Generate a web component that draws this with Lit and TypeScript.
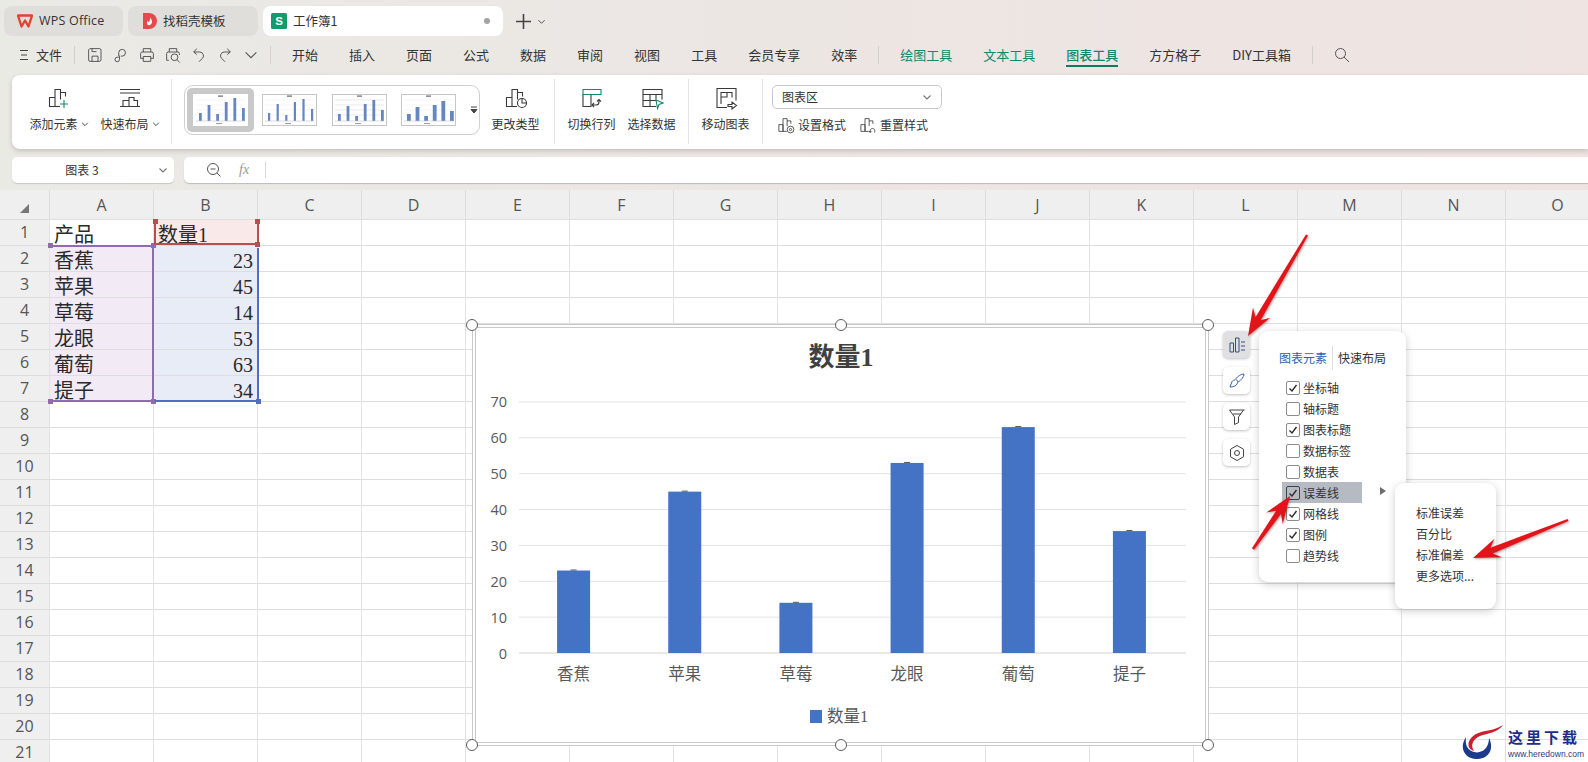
import { LitElement, html, css, svg } from "lit";
import { customElement } from "lit/decorators.js";
import { classMap } from "lit/directives/class-map.js";

const MENU = ["开始", "插入", "页面", "公式", "数据", "审阅", "视图", "工具", "会员专享", "效率"];
const COLS = "ABCDEFGHIJKLMNO".split("");
const ROWS = Array.from({ length: 21 }, (_, i) => i + 1);
const DATA = [
  ["香蕉", 23],
  ["苹果", 45],
  ["草莓", 14],
  ["龙眼", 53],
  ["葡萄", 63],
  ["提子", 34],
] as [string, number][];

const ELEMENTS: [string, boolean][] = [
  ["坐标轴", true],
  ["轴标题", false],
  ["图表标题", true],
  ["数据标签", false],
  ["数据表", false],
  ["误差线", true],
  ["网格线", true],
  ["图例", true],
  ["趋势线", false],
];

const icon = (body: unknown, size = 24) => html`<svg
  width=${size}
  height=${size}
  viewBox="0 0 24 24"
  fill="none"
  stroke="#3a3a3a"
  stroke-width="1.1"
>${body}</svg>`;

// the chart glyph that most ribbon icons are built on
const barsGlyph = svg`<path d="M2.5 11.5h5.5v9h-5.5zM8 20.5v-17h5.5v3h5v4M13.500 6.500v7" />`;

const ICONS = {
  addElement: icon(svg`${barsGlyph}<path d="M8 20.500h5" /><path d="M17 14v8M13 18h8" stroke="#0f8a6d" />`),
  quickLayout: icon(svg`<path d="M2 3.500h20M2 7h20M2 20.500h20M5 20.500v-6h6v6M11 14.500v-3h5v3h3.500v6" />`),
  changeType: icon(svg`${barsGlyph}<path d="M8 20.500h5" /><circle cx="18" cy="17" r="4.500" /><path d="M18 12.500V17h4.500" />`),
  swap: icon(svg`<path d="M3 3.500h18v5H3z" stroke="#0f8a6d" /><path d="M3 8.500v12h8v-12M11 20.500" /><path d="M12 19h4c2 0 3-1 3-3v-2M17 15.500l2-2 2 2M14 17l-2 2 2 2" />`),
  selectData: icon(svg`<path d="M16 20.500H3v-17h19v10M3 8.500h19M3 14.500h13M10 8.500v12M16 8.500v5" /><path d="M16 14l7 3-4 1.500-1.500 4z" stroke="#0f8a6d" />`),
  moveChart: icon(svg`<path d="M13 21.500H3v-19h19v12" /><path d="M7 18V6.500h11v5M7 11h6v-4.500" /><path d="M14 18.500h4v-2.500l4.500 3.500-4.500 3.500v-2.500h-4z" />`),
};

const SMALL_ICONS = {
  format: icon(svg`${barsGlyph}<path d="M8 20.500h5" /><circle cx="18" cy="18" r="4.500" /><circle cx="18" cy="18" r="1.500" />`, 18),
  reset: icon(svg`${barsGlyph}<path d="M8 20.500h5" /><path d="M15 22v-3c0-3 6-3 6 0v3M13.500 20l1.500 2 1.500-2" />`, 18),
};

const QUICK_ICONS = [
  svg`<path d="M5 3.500h13a2 2 0 0 1 2 2v13a2 2 0 0 1-2 2H5.500a2 2 0 0 1-2-2V5zM8 20.500v-7h8v7M8 3.500v4h6" />`,
  svg`<path d="M11 13.500H9v-5a4.500 4.500 0 1 1 4.500 5H12M10 14v4a3 3 0 1 1-3-3h2" />`,
  svg`<path d="M7 8V3.500h10V8M7 16.500H3.500V10a2 2 0 0 1 2-2h13a2 2 0 0 1 2 2v6.500H17M7 14h10v6.500H7z" />`,
  svg`<path d="M7 8V3.500h10V8M6.500 19H3.500V10a2 2 0 0 1 2-2h13a2 2 0 0 1 2 2v2" /><circle cx="14" cy="15" r="4.500" /><path d="M17.500 18.500l3.500 3.500" />`,
  svg`<path d="M9 3.500L5 8l4 3.500M5 8h8a5 5 0 0 1 3 9l-4 4" />`,
  svg`<path d="M15 3.500L19 8l-4 3.500M19 8h-8a5 5 0 0 0-3 9l4 4" />`,
];

function arrowPoints(tx: number, ty: number, px: number, py: number) {
  const len = Math.hypot(px - tx, py - ty);
  const dx = (px - tx) / len;
  const dy = (py - ty) / len;
  const at = (back: number, side: number) =>
    `${(px - dx * back - dy * side).toFixed(1)},${(py - dy * back + dx * side).toFixed(1)}`;
  return [
    `${(tx - dy * 1.2).toFixed(1)},${(ty + dx * 1.2).toFixed(1)}`,
    at(20, 3),
    at(27, 10),
    `${px},${py}`,
    at(27, -10),
    at(20, -3),
    `${(tx + dy * 1.2).toFixed(1)},${(ty - dx * 1.2).toFixed(1)}`,
  ].join(" ");
}

@customElement("app-root")
export class AppRoot extends LitElement {
  static styles = css`
    :host {
      display: block;
      position: relative;
      width: 1588px;
      height: 762px;
      overflow: hidden;
      background: linear-gradient(90deg, #eaeae5 0%, #ece6e3 50%, #efe4e2 100%);
      font-family: "Noto Sans CJK SC", sans-serif;
      font-size: 12px;
      color: #333;
    }

    svg {
      display: block;
      flex: none;
    }

    /* tabs */
    .tabs {
      display: flex;
      align-items: center;
      gap: 5px;
      height: 30px;
      padding: 6px 0 0 4px;
    }
    .tab {
      display: flex;
      align-items: center;
      gap: 6px;
      height: 30px;
      padding-left: 13px;
      box-sizing: border-box;
      border-radius: 8px;
      background: #dfdeda;
      font-size: 12.5px;
      line-height: 30px;
    }
    .tab.wps {
      width: 119px;
      font-family: "Open Sans", sans-serif;
      letter-spacing: 0.2px;
    }
    .tab.docer {
      width: 130px;
      padding-left: 14px;
    }
    .tab.book {
      width: 240px;
      padding-left: 8px;
      background: #fff;
    }
    .tab .dot {
      width: 6px;
      height: 6px;
      margin-left: auto;
      margin-right: 13px;
      border-radius: 50%;
      background: #a2a2a2;
    }
    .tab-add {
      display: flex;
      align-items: center;
      gap: 6px;
      margin-left: 8px;
    }

    /* menu row */
    .menu {
      display: flex;
      align-items: center;
      height: 31px;
      margin-top: 3px;
      padding-left: 19px;
      font-size: 13px;
      line-height: 31px;
    }
    .menu .file {
      margin-left: 7px;
      margin-right: 12px;
    }
    .menu .sep {
      width: 1px;
      height: 18px;
      background: #d4d0ce;
    }
    .quick {
      display: flex;
      gap: 8px;
      margin: 0 10px 0 11px;
    }
    .menu .items {
      display: flex;
      gap: 31px;
      margin: 0 21px;
    }
    .menu .tool-tab {
      color: #0f8a6d;
    }
    .menu .tool-tab.active {
      position: relative;
      font-weight: 500;
    }
    .menu .tool-tab.active::after {
      content: "";
      position: absolute;
      left: 0;
      right: 0;
      bottom: 3px;
      height: 2px;
      background: #0f7a62;
    }
    .menu .search {
      margin-left: 21px;
    }

    /* ribbon */
    .ribbon {
      display: flex;
      align-items: stretch;
      height: 74px;
      margin-left: 12px;
      margin-top: 5px;
      padding: 4px 0 5px 18px;
      box-sizing: border-box;
      border-radius: 8px 0 0 8px;
      background: #fff;
      box-shadow: 0 2px 5px rgba(60, 50, 50, 0.22);
      position: relative;
    }
    .rb-sep {
      width: 1px;
      background: #e4e4e4;
      flex: none;
    }
    .tool {
      display: flex;
      flex-direction: column;
      align-items: center;
      width: 47px;
      padding-top: 7px;
      flex: none;
      margin-right: 13px;
    }
    .tool .label {
      display: flex;
      align-items: center;
      gap: 3px;
      margin-top: 5px;
      height: 18px;
      line-height: 18px;
      white-space: nowrap;
    }
    .tool.caret {
      width: 58px;
    }
    .tool.last-caret {
      margin-right: 12px;
    }
    .tool.first {
      margin-left: 13px;
    }
    .tool.change {
      margin-right: 15px;
    }
    .gallery {
      display: flex;
      align-items: center;
      gap: 2px;
      width: 296px;
      height: 50px;
      margin: 6px 12px 0;
      padding-left: 2px;
      box-sizing: border-box;
      border: 1px solid #cfcfcf;
      border-radius: 9px;
      flex: none;
    }
    .thumb {
      display: flex;
      align-items: center;
      justify-content: center;
      width: 68px;
      height: 44px;
      border-radius: 5px;
    }
    .thumb.selected {
      background: #c9c9c9;
    }
    .gallery .more {
      margin-left: 5px;
    }
    .format {
      width: 170px;
      margin-left: 9px;
      margin-top: 6px;
    }
    .select {
      display: flex;
      align-items: center;
      justify-content: space-between;
      height: 24px;
      padding: 0 9px;
      box-sizing: border-box;
      border: 1px solid #c9c9c9;
      border-radius: 5px;
      line-height: 22px;
    }
    .format-row {
      display: flex;
      gap: 13px;
      margin-top: 7px;
      padding-left: 5px;
    }
    .format-row span {
      display: flex;
      align-items: center;
      gap: 3px;
      line-height: 18px;
    }

    /* formula row */
    .formula {
      display: flex;
      gap: 10px;
      height: 26px;
      margin: 8px 0 7px 12px;
    }
    .name-box {
      display: flex;
      align-items: center;
      justify-content: center;
      position: relative;
      width: 162px;
      border-radius: 5px;
      background: #fff;
      box-shadow: 0 1px 1px rgba(0, 0, 0, 0.15);
      line-height: 26px;
      padding-right: 22px;
      box-sizing: border-box;
    }
    .name-box svg {
      position: absolute;
      right: 6px;
      top: 8px;
    }
    .formula-box {
      display: flex;
      align-items: center;
      flex: 1;
      padding-left: 22px;
      border-radius: 5px 0 0 5px;
      background: #fff;
      box-shadow: 0 1px 1px rgba(0, 0, 0, 0.2);
    }
    .fx {
      margin-left: 17px;
      font-family: "Liberation Serif", serif;
      font-style: italic;
      font-size: 14px;
      color: #9a9a9a;
      width: 26px;
    }
    .formula-box .bar {
      width: 1px;
      height: 16px;
      background: #d8d8d8;
    }

    /* sheet */
    .sheet,
    .ranges {
      display: grid;
      grid-template-columns: 49px repeat(15, 104px);
      grid-template-rows: 29px repeat(21, 26px);
    }
    .sheet {
      background: #fff;
      position: relative;
    }
    .ranges {
      position: absolute;
      left: 0;
      top: 0;
      pointer-events: none;
    }
    .corner,
    .col-head,
    .row-head {
      display: flex;
      align-items: center;
      justify-content: center;
      box-sizing: border-box;
      background: #efefef;
      font-family: "Open Sans", sans-serif;
      font-size: 16px;
      color: #555;
    }
    .corner {
      justify-content: flex-end;
      padding: 8px 20px 0 0;
    }
    .col-head {
      border-left: 1px solid #dcdcdc;
    }
    .row-head {
      border-top: 1px solid #dcdcdc;
      padding-bottom: 2px;
    }
    .cell {
      box-sizing: border-box;
      border-top: 1px solid #dedede;
      border-left: 1px solid #e2e2e2;
      padding: 3px 4px 0 4px;
      font-family: "Liberation Serif", "Noto Sans CJK SC", serif;
      font-size: 20px;
      line-height: 24px;
      color: #2a2a2a;
      white-space: nowrap;
    }
    .cell.num {
      text-align: right;
    }
    .cell.fill-a {
      background: #f2ebf5;
    }
    .cell.fill-b {
      background: #e7ecf7;
    }
    .cell.fill-r {
      background: #f9e9e8;
    }
    .range {
      position: relative;
      box-sizing: border-box;
    }
    .range.purple {
      grid-column: 2;
      grid-row: 3 / 9;
      margin: 0 -1px -1px 0;
      border-top: 2px solid #8e6bb2;
      border-right: 2px solid #8e6bb2;
      border-bottom: 2px solid #8e6bb2;
    }
    .range.red {
      grid-column: 3;
      grid-row: 2;
      margin: 2px -2px 0 1px;
      border-left: 2px solid #b5504f;
      border-right: 2px solid #b5504f;
      border-bottom: 2px solid #b5504f;
    }
    .range.blue {
      grid-column: 3;
      grid-row: 3 / 9;
      margin: 3px -2px -1px 2px;
      border-right: 2px solid #4f6fc0;
      border-bottom: 2px solid #4f6fc0;
    }
    .sq {
      position: absolute;
      width: 5px;
      height: 5px;
    }
    .sq.tl { left: -1px; top: -4px; }
    .sq.tr { right: -4px; top: -4px; }
    .sq.bl { left: -1px; bottom: -4px; }
    .sq.br { right: -4px; bottom: -4px; }
    .red .sq.tl { left: -3px; top: -2px; }
    .red .sq.tr { right: -3px; top: -2px; }
    .red .sq.br { right: -3px; }
    .purple .sq {
      background: #8e6bb2;
    }
    .red .sq {
      background: #b5504f;
    }
    .blue .sq {
      background: #4f6fc0;
    }

    /* chart overlay */
    .chart {
      position: absolute;
      left: 472px;
      top: 324px;
      width: 737px;
      height: 422px;
      box-sizing: border-box;
      border: 4px double #c9c9c9;
      background: #fff;
    }
    .handle {
      position: absolute;
      width: 10px;
      height: 10px;
      border: 1px solid #5c5c5c;
      border-radius: 50%;
      background: #fff;
      transform: translate(-50%, -50%);
    }
    .h-l { left: -4px; }
    .h-c { left: 50%; }
    .h-r { left: calc(100% + 3px); }
    .h-t { top: -3px; }
    .h-b { top: calc(100% + 3px); }

    .chart text {
      font-family: "Open Sans", "Noto Sans CJK SC", sans-serif;
      fill: #595959;
    }
    .chart text.cjk {
      font-family: "Liberation Serif", "Noto Sans CJK SC", serif;
      font-size: 16.5px;
    }
    .chart text.title {
      font-family: "Liberation Serif", "Noto Sans CJK SC", serif;
      font-size: 26px;
      font-weight: 700;
      fill: #404040;
    }

    /* chart side buttons */
    .side {
      position: absolute;
      left: 1223px;
      top: 331px;
      display: flex;
      flex-direction: column;
      gap: 9px;
    }
    .side div {
      display: flex;
      align-items: center;
      justify-content: center;
      width: 27px;
      height: 27px;
      border-radius: 5px;
      background: #fff;
      box-shadow: 0 1px 3px rgba(0, 0, 0, 0.25);
    }
    .side div.on {
      background: #e0e0e2;
    }

    .panel {
      position: absolute;
      left: 1259px;
      top: 331px;
      width: 147px;
      height: 251px;
      padding-top: 17px;
      box-sizing: border-box;
      border-radius: 9px;
      background: #fff;
      box-shadow: 0 2px 9px rgba(0, 0, 0, 0.2);
    }
    .panel-tabs {
      display: flex;
      align-items: center;
      gap: 5px;
      height: 20px;
      margin-bottom: 9px;
      padding-left: 20px;
      line-height: 20px;
    }
    .panel-tabs .on {
      color: #2b62b5;
    }
    .panel-tabs i {
      width: 1px;
      height: 24px;
      background: #e0e0e0;
    }
    .check-row {
      display: flex;
      align-items: center;
      gap: 3px;
      width: 76px;
      height: 21px;
      margin-left: 23px;
      padding-left: 4px;
      line-height: 21px;
    }
    .check-row.hover {
      background: #b6bac3;
    }
    .box {
      display: flex;
      align-items: center;
      justify-content: center;
      width: 14px;
      height: 14px;
      box-sizing: border-box;
      border: 1px solid #8c8c8c;
      border-radius: 2px;
      background: #fff;
      flex: none;
    }
    .check-row.hover .box {
      background: transparent;
      border-color: #444;
    }
    .more-arrow {
      position: absolute;
      left: 121px;
      top: 156px;
      width: 0;
      height: 0;
      border-left: 6px solid #6d6d6d;
      border-top: 4px solid transparent;
      border-bottom: 4px solid transparent;
    }
    .submenu {
      position: absolute;
      left: 1395px;
      top: 483px;
      width: 101px;
      height: 126px;
      padding: 19px 0 0 21px;
      box-sizing: border-box;
      border-radius: 9px;
      background: #fff;
      box-shadow: 0 2px 9px rgba(0, 0, 0, 0.2);
      line-height: 21px;
    }

    .arrows {
      position: absolute;
      left: 0;
      top: 0;
      pointer-events: none;
      filter: drop-shadow(1px 1px 1px rgba(90, 40, 40, 0.45));
    }

    /* watermark */
    .mark {
      position: absolute;
      left: 1460px;
      top: 722px;
      display: flex;
      gap: 3px;
    }
    .mark .t1 {
      font-family: "Noto Sans CJK SC", sans-serif;
      font-weight: 700;
      font-size: 15px;
      line-height: 20px;
      letter-spacing: 3px;
      color: #1f2d86;
      margin-top: 5px;
    }
    .mark .t2 {
      font-family: "Liberation Sans", sans-serif;
      font-size: 8.5px;
      line-height: 12px;
      color: #2f3a78;
      margin-top: 1px;
    }
    .mark .words {
      margin-left: 1px;
    }
  `;

  private chevron(size = 10, color = "#777") {
    return html`<svg width=${size} height=${size} viewBox="0 0 10 10" fill="none" stroke=${color} stroke-width="1.1"><path d="M1.500 3.500L5 7l3.500-3.500" /></svg>`;
  }

  private thumb(values: number[], thick: number, selected = false, fade = false) {
    const bars = values.map(
      (v, i) => svg`<rect x=${6 + i * 8.6} y=${27 - v} width=${thick} height=${v} fill="#4a71b8" opacity="0.85" />`
    );
    const lines = [6, 11, 16, 21].map(
      (y) => svg`<path d="M3 ${y}h49" stroke=${fade ? "#dcdcdc" : "#eeeeee"} stroke-width="0.6" />`
    );
    return html`<div class=${classMap({ thumb: true, selected })}>
      <svg width="55" height="32" viewBox="0 0 55 32">
        <rect x="0.500" y="0.500" width="54" height="31" fill="#fff" stroke=${selected ? "#fff" : "#c6c6c6"} />
        ${lines}
        <rect x="25" y="1.500" width="5" height="1.200" fill="#666" />
        ${bars}
        <path d="M3 27h49" stroke="#c4c4c4" stroke-width="0.6" />
        <rect x="23" y="29" width="6" height="0.800" fill="#888" />
      </svg>
    </div>`;
  }

  private tool(label: string, ic: unknown, extra: Record<string, boolean> = {}) {
    return html`<div class=${classMap({ tool: true, ...extra })}>
      ${ic}
      <div class="label">${label}${extra.caret ? this.chevron(8, "#333") : ""}</div>
    </div>`;
  }

  private renderChart() {
    const x0 = 43;
    const x1 = 710;
    const y0 = 325;
    const unit = 3.586;
    const band = (x1 - x0) / DATA.length;
    return html`<div class="chart">
      <svg width="729" height="414" viewBox="0 0 729 414">
        <text class="title" x="365" y="38" text-anchor="middle">数量1</text>
        ${[0, 10, 20, 30, 40, 50, 60, 70].map((v) => {
          const y = y0 - v * unit;
          return svg`
            <path d="M${x0} ${y}H${x1}" stroke=${v === 0 ? "#d2d2d2" : "#e3e3e3"} />
            <text x="31" y=${y + 5.500} text-anchor="end" font-size="14.500">${v}</text>`;
        })}
        ${DATA.map(([name, v], i) => {
          const cx = x0 + band * (i + 0.5) - 1;
          const top = y0 - v * unit;
          return svg`
            <rect x=${cx - 16.500} y=${top} width="33" height=${v * unit} fill="#4472c4" />
            <path d="M${cx - 3} ${top - 0.500}h6" stroke="#555" />
            <text class="cjk" x=${cx} y="352" text-anchor="middle">${name}</text>`;
        })}
        <rect x="334" y="382" width="12" height="13" fill="#4472c4" />
        <text class="cjk" x="351" y="394">数量1</text>
      </svg>
      <i class="handle h-l h-t"></i>
      <i class="handle h-c h-t"></i>
      <i class="handle h-r h-t"></i>
      <i class="handle h-l h-b"></i>
      <i class="handle h-c h-b"></i>
      <i class="handle h-r h-b"></i>
    </div>`;
  }

  private cellClass(col: number, row: number) {
    return classMap({
      cell: true,
      num: col === 1 && row > 1 && row < 8,
      "fill-a": col === 0 && row > 1 && row < 8,
      "fill-b": col === 1 && row > 1 && row < 8,
      "fill-r": col === 1 && row === 1,
    });
  }

  private cellText(col: number, row: number) {
    if (row === 1) return col === 0 ? "产品" : col === 1 ? "数量1" : "";
    if (row > 7 || col > 1) return "";
    return DATA[row - 2][col];
  }

  render() {
    return html`
      <div class="tabs">
        <div class="tab wps">
          <svg width="16" height="14" viewBox="0 0 16 14" fill="none">
            <path d="M1 1.500h14L11.500 12.500 8 6.500 4.500 12.500z" stroke="#e8402c" stroke-width="2.300" stroke-linejoin="round" />
          </svg>
          WPS Office
        </div>
        <div class="tab docer">
          <svg width="15" height="18" viewBox="0 0 15 18">
            <path d="M1 1h6a8 8 0 0 1 0 16H1z" fill="#e8474c" />
            <path d="M8 5c.5 2 2.500 3 2 5.500C9.500 12.500 7.500 13.500 6 13c-1.500-1-1.500-3 0-4.500 0 1 .5 1.500 1 1.500C8 8.500 8.500 7 8 5z" fill="#fff" />
          </svg>
          找稻壳模板
        </div>
        <div class="tab book">
          <svg width="16" height="16" viewBox="0 0 16 16">
            <rect width="16" height="16" rx="1.500" fill="#0f9d6e" />
            <text x="8" y="12" text-anchor="middle" font-size="11.500" font-family="Liberation Sans" font-weight="700" fill="#fff">S</text>
          </svg>
          工作簿1
          <i class="dot"></i>
        </div>
        <div class="tab-add">
          <svg width="15" height="15" viewBox="0 0 15 15" stroke="#444" stroke-width="1.600"><path d="M7.500 0v15M0 7.500h15" /></svg>
          ${this.chevron(9, "#555")}
        </div>
      </div>

      <div class="menu">
        <svg width="10" height="12" viewBox="0 0 10 12" stroke="#444"><path d="M1 1.500h8M2 6h6M1 10.500h8" /></svg>
        <span class="file">文件</span>
        <i class="sep"></i>
        <div class="quick">
          ${QUICK_ICONS.map((p) => icon(p, 18))}
          <svg width="18" height="18" viewBox="0 0 10 10" fill="none" stroke="#555" stroke-width=".6"><path d="M2 3.500L5 6.500l3-3" /></svg>
        </div>
        <i class="sep"></i>
        <div class="items">
          ${MENU.map((m) => html`<span>${m}</span>`)}
        </div>
        <i class="sep"></i>
        <div class="items">
          <span class="tool-tab">绘图工具</span>
          <span class="tool-tab">文本工具</span>
          <span class="tool-tab active">图表工具</span>
          <span>方方格子</span>
          <span>DIY工具箱</span>
        </div>
        <i class="sep"></i>
        <svg class="search" width="16" height="16" viewBox="0 0 16 16" fill="none" stroke="#555"><circle cx="6.500" cy="6.500" r="5" /><path d="M10 10l5 5" /></svg>
      </div>

      <div class="ribbon">
        ${this.tool("添加元素", ICONS.addElement, { caret: true })}
        ${this.tool("快速布局", ICONS.quickLayout, { caret: true, "last-caret": true })}
        <i class="rb-sep"></i>
        <div class="gallery">
          ${this.thumb([8, 16, 7, 19, 23, 13], 2.800, true)}
          ${this.thumb([8, 17, 6, 19, 22, 12], 2.200)}
          ${this.thumb([7, 15, 5, 17, 21, 11], 2.800, false, true)}
          ${this.thumb([7, 14, 5, 16, 20, 10], 3.800)}
          <svg class="more" width="10" height="10" viewBox="0 0 10 10" stroke="#444" fill="#444"><path d="M2 2h6" fill="none" /><path d="M2 4.500h6L5 8z" /></svg>
        </div>
        ${this.tool("更改类型", ICONS.changeType, { change: true })}
        <i class="rb-sep"></i>
        ${this.tool("切换行列", ICONS.swap, { first: true })}
        ${this.tool("选择数据", ICONS.selectData)}
        <i class="rb-sep"></i>
        ${this.tool("移动图表", ICONS.moveChart, { first: true })}
        <i class="rb-sep"></i>
        <div class="format">
          <div class="select">图表区 ${this.chevron(10)}</div>
          <div class="format-row">
            <span>${SMALL_ICONS.format}设置格式</span>
            <span>${SMALL_ICONS.reset}重置样式</span>
          </div>
        </div>
      </div>

      <div class="formula">
        <div class="name-box">图表 3 ${this.chevron(10)}</div>
        <div class="formula-box">
          <svg width="16" height="16" viewBox="0 0 16 16" fill="none" stroke="#555"><circle cx="7" cy="7" r="5.500" /><path d="M4.500 7h5M11 11l3.500 3.500" /></svg>
          <span class="fx">fx</span>
          <i class="bar"></i>
        </div>
      </div>

      <div class="sheet">
        <div class="corner"><svg width="9" height="9" viewBox="0 0 9 9"><path d="M9 0v9H0z" fill="#777" /></svg></div>
        ${COLS.map((c) => html`<div class="col-head">${c}</div>`)}
        ${ROWS.map(
          (r) => html`<div class="row-head">${r}</div>
            ${COLS.map((_, c) => html`<div class=${this.cellClass(c, r)}>${this.cellText(c, r)}</div>`)}`
        )}
        <div class="ranges">
          <div class="range purple">
            <i class="sq tl"></i>
            <i class="sq tr"></i>
            <i class="sq bl"></i>
            <i class="sq br"></i>
          </div>
          <div class="range red">
            <i class="sq tl"></i>
            <i class="sq tr"></i>
            <i class="sq br"></i>
          </div>
          <div class="range blue">
            <i class="sq br"></i>
          </div>
        </div>
      </div>

      ${this.renderChart()}

      <div class="side">
        <div class="on">
          <svg width="18" height="18" viewBox="0 0 18 18" fill="none" stroke="#33507f"><path d="M2 7h3.500v9H2zM7.500 2H11v14H7.500zM13 6h4M13 10h4M13 14h4" /></svg>
        </div>
        <div>
          <svg width="18" height="18" viewBox="0 0 18 18" fill="none" stroke="#3c62b0"><path d="M16 2c-3 0-6 2-8.500 5L10.500 10C13 8 16 5 16 2zM7 8c-2 0-3 1-3.500 3L2 15c3 0 6-1 7-3 .5-1 .8-1.500.5-2.500" /></svg>
        </div>
        <div>
          <svg width="18" height="18" viewBox="0 0 18 18" fill="none" stroke="#444"><path d="M1.500 2h15M1.500 2l5 7v7.500l4-2V9l5-7" /><path d="M5 6h8" /></svg>
        </div>
        <div>
          <svg width="18" height="18" viewBox="0 0 18 18" fill="none" stroke="#444"><path d="M9 1.500l6.500 3.700v7.600L9 16.500l-6.500-3.700V5.200z" /><circle cx="9" cy="9" r="2.500" /></svg>
        </div>
      </div>

      <div class="panel">
        <div class="panel-tabs">
          <span class="on">图表元素</span>
          <i></i>
          <span>快速布局</span>
        </div>
        ${ELEMENTS.map(
          ([name, on]) => html`<div class=${classMap({ "check-row": true, hover: name === "误差线" })}>
            <span class="box">
              ${on
                ? html`<svg width="10" height="10" viewBox="0 0 10 10" fill="none" stroke="#2c2c2c" stroke-width="1.400"><path d="M1.500 5.500L4 8l4.500-6" /></svg>`
                : ""}
            </span>
            ${name}
          </div>`
        )}
        <i class="more-arrow"></i>
      </div>

      <div class="submenu">
        <div>标准误差</div>
        <div>百分比</div>
        <div>标准偏差</div>
        <div>更多选项...</div>
      </div>

      <svg class="arrows" width="1588" height="762" viewBox="0 0 1588 762">
        <polygon points=${arrowPoints(1307, 235, 1248, 336)} fill="#e2141a" />
        <polygon points=${arrowPoints(1253, 549, 1290, 496)} fill="#e2141a" />
        <polygon points=${arrowPoints(1568, 520, 1473, 558)} fill="#e2141a" />
      </svg>

      <div class="mark">
        <svg width="44" height="40" viewBox="0 0 44 40">
          <path d="M6 15C-2 27 6 38 18 37C30 36 34 26 29 16C29 26 22 32 14 30C7 28 5 23 6 15Z" fill="#1c3a8c" />
          <path d="M43 3C30 11 20 7 12 15C7 20 7 27 14 29C10 23 13 17 20 14C28 11 37 11 43 3Z" fill="#c9202b" />
        </svg>
        <div class="words">
          <div class="t1">这里下载</div>
          <div class="t2">www.heredown.com</div>
        </div>
      </div>
    `;
  }
}
